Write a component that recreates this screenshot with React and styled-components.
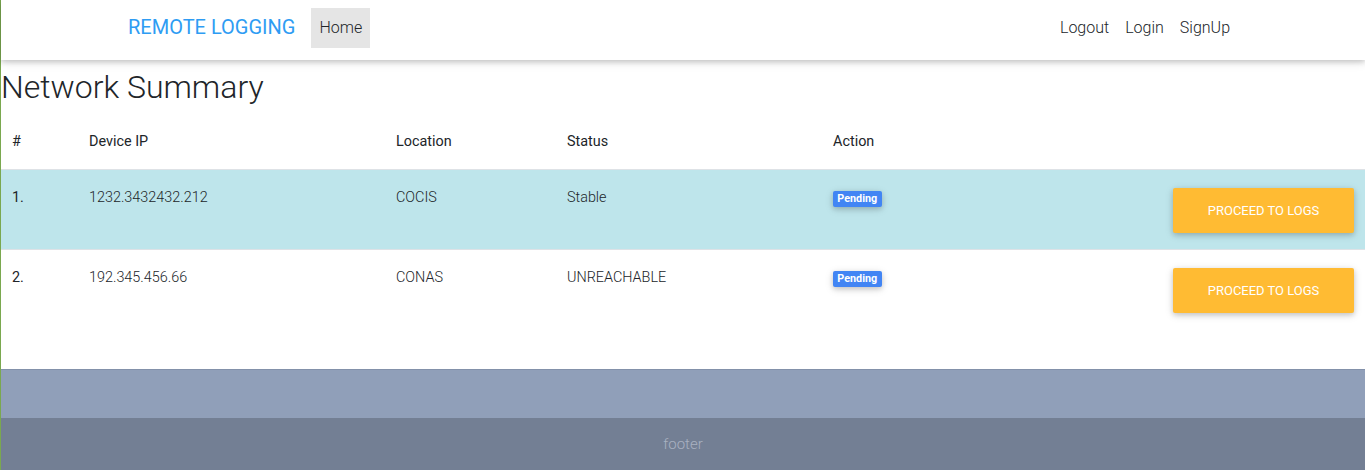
import React from "react";
import styled, { createGlobalStyle } from "styled-components";

const Global = createGlobalStyle`
  html, body { margin: 0; padding: 0; background: #fff; }
  body {
    font-family: Roboto, "Noto Sans", "Liberation Sans", sans-serif;
    font-weight: 300;
    color: #212529;
    -webkit-font-smoothing: antialiased;
  }
  * { box-sizing: border-box; }
`;

const Page = styled.div`
  border-left: 1px solid #7aa84f;
  display: flex;
  flex-direction: column;
`;

const Navbar = styled.nav`
  height: 60px;
  background: #fff;
  box-shadow: 0 2px 5px 0 rgba(0, 0, 0, 0.16), 0 2px 10px 0 rgba(0, 0, 0, 0.12);
  position: relative;
  z-index: 2;
`;

const NavInner = styled.div`
  max-width: 1140px;
  margin: 0 auto;
  padding: 8px 15px 0;
  display: flex;
  align-items: flex-start;
`;

const Brand = styled.a`
  font-size: 20px;
  font-weight: 400;
  color: #2e9cf3;
  margin: 4px 16px 0 0;
  text-decoration: none;
  line-height: 30px;
`;

const NavList = styled.ul`
  display: flex;
  list-style: none;
  margin: 0;
  padding: 0;
  margin-left: ${(p) => (p.$right ? "auto" : "0")};
`;

const NavLink = styled.a`
  display: block;
  font-size: 16px;
  line-height: 24px;
  padding: 8px;
  color: #212529;
  font-weight: 300;
  text-decoration: none;
  background: ${(p) => (p.$active ? "#e5e5e5" : "transparent")};
`;

const Main = styled.main`
  padding-bottom: 40px;
`;

const Title = styled.h1`
  margin: 8px 0 8px;
  font-size: 32px;
  font-weight: 300;
  line-height: 38px;
  color: #212529;
`;

const Table = styled.table`
  width: 100%;
  border-collapse: collapse;
  table-layout: fixed;
`;

const Th = styled.th`
  text-align: left;
  font-weight: 400;
  font-size: 14.4px;
  line-height: 22px;
  padding: 17px 12px 16px ${(p) => (p.$first ? "11px" : "12px")};
  color: #212529;
  vertical-align: top;
`;

const Tr = styled.tr`
  background: ${(p) => (p.$info ? "#bee5eb" : "transparent")};
`;

const Td = styled.td`
  border-top: 1px solid #dee2e6;
  font-size: 14.4px;
  line-height: 22px;
  font-weight: ${(p) => (p.$head ? 400 : 300)};
  padding: 17px ${(p) => (p.$last ? "11px" : "12px")} 16px ${(p) => (p.$first ? "11px" : "12px")};
  color: #212529;
  vertical-align: top;
  text-align: ${(p) => (p.$last ? "right" : "left")};
`;

const Badge = styled.span`
  display: inline-block;
  background: #4285f4;
  color: #fff;
  font-weight: 700;
  font-size: 10.8px;
  line-height: 1;
  padding: 2.7px 4.3px;
  border-radius: 2px;
  box-shadow: 0 2px 5px 0 rgba(0, 0, 0, 0.16), 0 2px 10px 0 rgba(0, 0, 0, 0.12);
`;

const Button = styled.button`
  margin-top: 1px;
  width: 181px;
  height: 45px;
  border: 0;
  border-radius: 2px;
  background: #ffbb33;
  color: #fff;
  font-family: Roboto, "Liberation Sans", sans-serif;
  font-size: 12.96px;
  font-weight: 400;
  text-transform: uppercase;
  line-height: 19px;
  padding: 13px 0;
  box-shadow: 0 2px 5px 0 rgba(0, 0, 0, 0.16), 0 2px 10px 0 rgba(0, 0, 0, 0.12);
  cursor: pointer;
`;

const Footer = styled.footer`
  background: #909fb9;
  border-top: 1px solid #8391aa;
  display: flex;
  flex-direction: column;
`;

const FooterSpace = styled.div`
  height: 48px;
`;

const Copyright = styled.div`
  background: rgba(0, 0, 0, 0.2);
  color: #a9b1c1;
  text-align: center;
  font-size: 15px;
  line-height: 22px;
  padding: 15px 0;
  font-weight: 300;
`;

const rows = [
  { n: "1.", ip: "1232.3432432.212", loc: "COCIS", status: "Stable", info: true },
  { n: "2.", ip: "192.345.456.66", loc: "CONAS", status: "UNREACHABLE", info: false },
];

export default function App() {
  return (
    <>
      <Global />
      <Page>
        <Navbar>
          <NavInner>
            <Brand href="#">REMOTE LOGGING</Brand>
            <NavList>
              <li><NavLink $active href="#">Home</NavLink></li>
            </NavList>
            <NavList $right>
              <li><NavLink href="#">Logout</NavLink></li>
              <li><NavLink href="#">Login</NavLink></li>
              <li><NavLink href="#">SignUp</NavLink></li>
            </NavList>
          </NavInner>
        </Navbar>
        <Main>
          <Title>Network Summary</Title>
          <Table>
            <colgroup>
              <col style={{ width: 76 }} />
              <col style={{ width: 307 }} />
              <col style={{ width: 171 }} />
              <col style={{ width: 266 }} />
              <col />
              <col style={{ width: 204 }} />
            </colgroup>
            <thead>
              <tr>
                <Th $first>#</Th>
                <Th>Device IP</Th>
                <Th>Location</Th>
                <Th>Status</Th>
                <Th>Action</Th>
                <Th></Th>
              </tr>
            </thead>
            <tbody>
              {rows.map((r) => (
                <Tr key={r.n} $info={r.info}>
                  <Td $first $head>{r.n}</Td>
                  <Td>{r.ip}</Td>
                  <Td>{r.loc}</Td>
                  <Td>{r.status}</Td>
                  <Td><Badge>Pending</Badge></Td>
                  <Td $last><Button>Proceed to logs</Button></Td>
                </Tr>
              ))}
            </tbody>
          </Table>
        </Main>
        <Footer>
          <FooterSpace />
          <Copyright>footer</Copyright>
        </Footer>
      </Page>
    </>
  );
}
